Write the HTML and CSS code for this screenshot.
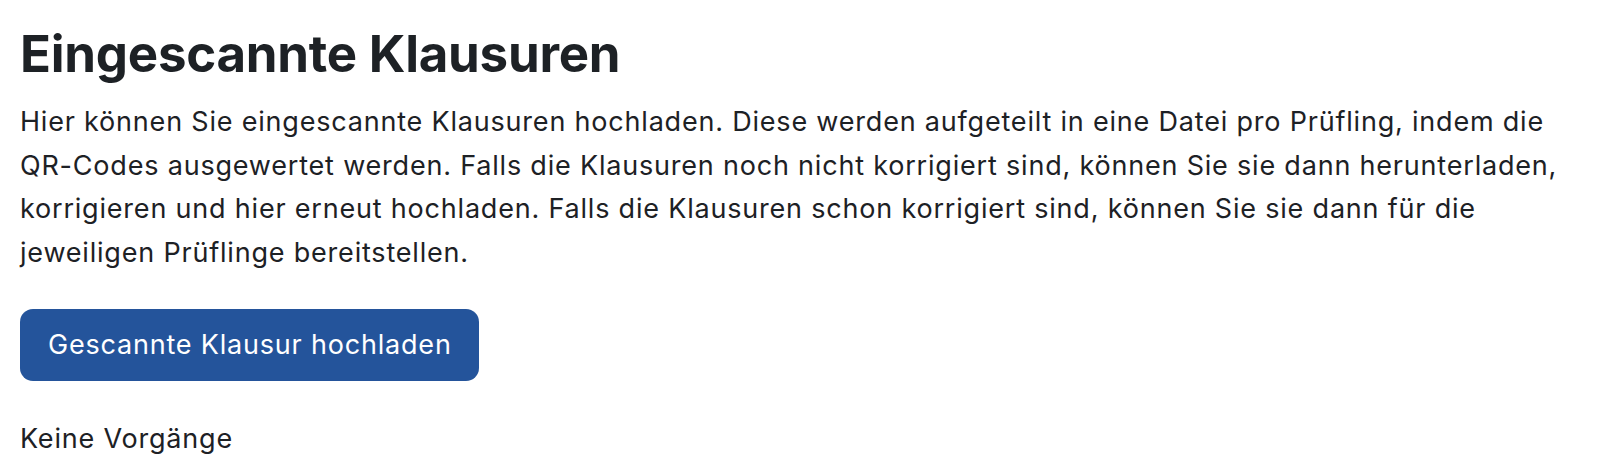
FILE: index.html
```html
<!DOCTYPE html>
<html lang="de">
<head>
<meta charset="utf-8">
<title>Eingescannte Klausuren</title>
<link rel="stylesheet" href="styles.css">
</head>
<body>
<main class="page">
  <h2 class="title">Eingescannte Klausuren</h2>
  <p class="intro">Hier können Sie eingescannte Klausuren hochladen. Diese werden aufgeteilt in eine Datei pro Prüfling, indem die QR-Codes ausgewertet werden. Falls die Klausuren noch nicht korrigiert sind, können Sie sie dann herunterladen, korrigieren und hier erneut hochladen. Falls die Klausuren schon korrigiert sind, können Sie sie dann für die jeweiligen Prüflinge bereitstellen.</p>
  <div class="actions">
    <button class="btn-primary" type="button">Gescannte Klausur hochladen</button>
  </div>
  <p class="status">Keine Vorgänge</p>
</main>
</body>
</html>
```
FILE: styles.css
```css
html, body {
  margin: 0;
  padding: 0;
  background: #ffffff;
}
body {
  font-family: Inter, "Noto Sans", "Liberation Sans", sans-serif;
  color: #1d2125;
  font-size: 27px;
  line-height: 43.5px;
  letter-spacing: 0.8px;
}
.page {
  padding: 23px 20px 0 20px;
}
.title {
  margin: 0 0 16px 0;
  font-size: 51px;
  font-weight: 700;
  line-height: 1.2;
  letter-spacing: -0.25px;
}
.intro {
  margin: 0;
}
.actions {
  margin-top: 35px;
}
.btn-primary {
  font: inherit;
  letter-spacing: inherit;
  color: #ffffff;
  background: #24549b;
  border: none;
  border-radius: 13px;
  padding: 14px 27px 14px 28px;
  height: 72px;
  cursor: pointer;
}
.status {
  margin: 36px 0 0 0;
}
```
